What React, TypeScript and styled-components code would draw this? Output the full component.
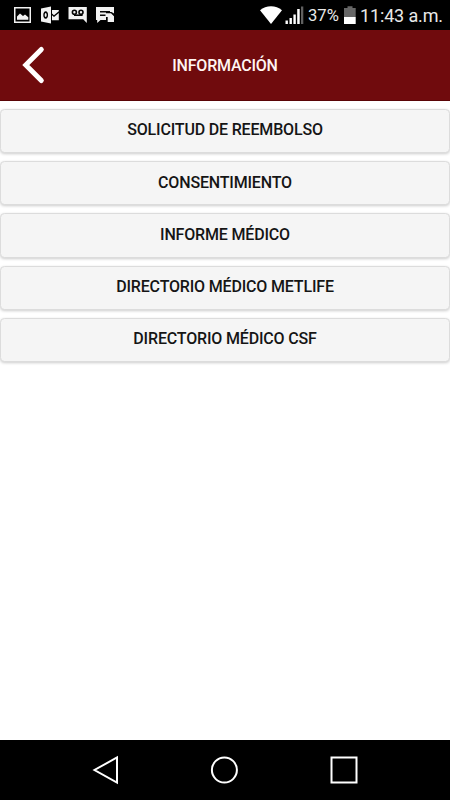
import React from 'react';
import styled, { createGlobalStyle } from 'styled-components';

const GlobalStyle = createGlobalStyle`
  * { box-sizing: border-box; }
  body { margin: 0; background: #fff; font-family: Roboto, sans-serif; }
  svg { display: block; }
`;

const Screen = styled.div`
  display: flex;
  flex-direction: column;
  width: 450px;
  height: 800px;
  overflow: hidden;
  background: #fff;
`;

const StatusBar = styled.div`
  display: flex;
  justify-content: space-between;
  flex: none;
  height: 30px;
  background: #000;
  color: #e9e9e9;
`;

const StatusText = styled.span<{ $width: number; $size: number; $spacing?: number }>`
  width: ${(p) => p.$width}px;
  height: 30px;
  font-size: ${(p) => p.$size}px;
  letter-spacing: ${(p) => p.$spacing ?? 0}px;
  line-height: 32px;
  white-space: nowrap;
`;

const StatusGroup = styled.div`
  display: flex;
`;

const Header = styled.header`
  display: grid;
  grid-template-columns: 66px 1fr 66px;
  align-items: center;
  flex: none;
  height: 71px;
  background: #700b0d;
  border-bottom: 1px solid #5a0507;
`;

const BackButton = styled.button`
  padding: 0 0 0 20px;
  border: 0;
  background: none;
`;

const Title = styled.h1`
  margin: 0;
  padding-top: 1px;
  color: #fff5f2;
  font-size: 16px;
  font-weight: 500;
  line-height: 20px;
  letter-spacing: -0.22px;
  text-align: center;
`;

const Menu = styled.main`
  display: flex;
  flex: 1;
  flex-direction: column;
  gap: 8px;
  padding-top: 8px;
`;

const MenuButton = styled.button`
  height: 44.2px;
  padding: 0 0 1.5px;
  border: 1px solid #dcdcdc;
  border-radius: 4.5px;
  background: #f5f5f5;
  box-shadow: 0 1px 3px rgba(0, 0, 0, 0.2);
  color: #151515;
  font: 500 16px/20px Roboto, sans-serif;
  letter-spacing: -0.17px;
`;

const NavBar = styled.nav`
  display: grid;
  grid-template-columns: repeat(3, 119px);
  justify-content: center;
  flex: none;
  height: 60px;
  background: #000;
`;

const NavButton = styled.button`
  display: flex;
  align-items: center;
  justify-content: center;
  padding: 0;
  border: 0;
  background: none;
`;

const items = [
  'SOLICITUD DE REEMBOLSO',
  'CONSENTIMIENTO',
  'INFORME MÉDICO',
  'DIRECTORIO MÉDICO METLIFE',
  'DIRECTORIO MÉDICO CSF',
];

const Notifications = () => (
  <svg width="130" height="30" fill="#f2f2f2">
    <path fillRule="evenodd" d="M14 7h17v16H14zM15.5 8.5v13h14v-13z" />
    <path d="M17 19.7v-3.3l3-2.9 3 2.4 2-1.4 3.3 2.8v2.4z" />
    <path fillRule="evenodd" d="M41 8.5 51 6.5v17L41 21.5zM45.7 11.2c-3.2 0-3.2 7.5 0 7.5s3.2-7.5 0-7.5zm0 1.8c1.3 0 1.3 4 0 4s-1.3-4 0-4z" />
    <path d="M52 10h6.8v1.2L54 15.2l-2-1.6zM52 15.2l2 1.7 4.8-4v7.4H52z" />
    <path d="M68.5 7h18.3v16l-3.6-3.7H68.5z" />
    <g fill="none" stroke="#050505" strokeWidth="1.6">
      <circle cx="74.4" cy="12.3" r="2" />
      <circle cx="81" cy="12.3" r="2" />
      <path d="M74 15.2h8.6" />
    </g>
    <path d="M96 7h18v6.5L111.5 12H106v8h-5.5L97.2 23v-3H96z" />
    <path d="M100 11.8h10M100 15.2h6" stroke="#090909" strokeWidth="1.5" />
    <path d="M105.5 13.3h5.5l3 3V22h-6.3v-5h-2.2z" />
  </svg>
);

const SignalIcons = () => (
  <svg width="48" height="30" fill="#fff">
    <path d="M0 10.3c6-5.4 16-5.4 22 0L11 24z" />
    <path d="M25.5 20.5h2.4V24h-2.4zM29.5 18h2.4v6h-2.4zM33.4 14.5h2.4V24h-2.4zM37.2 9h2.5V24h-2.5z" />
    <path fill="#606060" d="M41 6.5h2.3V24H41z" />
  </svg>
);

const Battery = () => (
  <svg width="16" height="30">
    <path d="M3.5 6.2h5V8h3.2v9H0V8h3.5z" fill="#666" />
    <path d="M0 17h11.7v7H0z" fill="#fff" />
  </svg>
);

export default function App() {
  return (
    <>
      <GlobalStyle />
      <Screen>
        <StatusBar>
          <Notifications />
          <StatusGroup>
            <SignalIcons />
            <StatusText $width={36} $size={16.6}>37%</StatusText>
            <Battery />
            <StatusText $width={90} $size={18} $spacing={-0.15}>11:43 a.m.</StatusText>
          </StatusGroup>
        </StatusBar>
        <Header>
          <BackButton aria-label="Atrás">
            <svg width="28" height="40" fill="none" stroke="#fff" strokeWidth="5" strokeLinecap="round">
              <path d="M21.3 4.5 5.8 20 21.3 35.5" />
            </svg>
          </BackButton>
          <Title>INFORMACIÓN</Title>
        </Header>
        <Menu>
          {items.map((item) => <MenuButton key={item}>{item}</MenuButton>)}
        </Menu>
        <NavBar>
          <NavButton aria-label="Atrás">
            <svg width="30" height="30" fill="none" stroke="#fff" strokeWidth="2">
              <path d="M26 2.5v25L3.5 15z" />
            </svg>
          </NavButton>
          <NavButton aria-label="Inicio">
            <svg width="30" height="30" fill="none" stroke="#fff" strokeWidth="2">
              <circle cx="14.4" cy="15" r="12.5" />
            </svg>
          </NavButton>
          <NavButton aria-label="Recientes">
            <svg width="30" height="30" fill="none" stroke="#fff" strokeWidth="2">
              <path d="M2.5 2.5h25v25h-25z" />
            </svg>
          </NavButton>
        </NavBar>
      </Screen>
    </>
  );
}
